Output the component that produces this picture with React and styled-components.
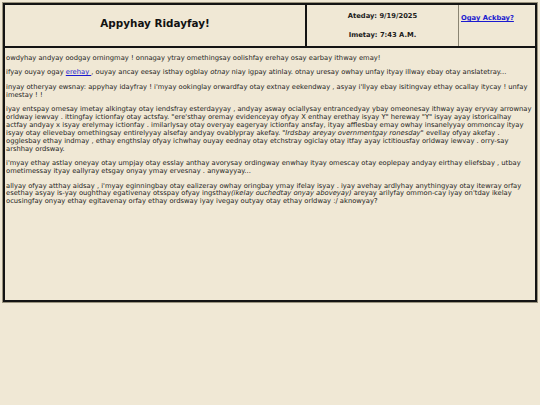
import React from 'react';
import styled, { createGlobalStyle } from 'styled-components';

const GlobalStyle = createGlobalStyle`
  html, body {
    margin: 0;
    padding: 0;
    background: #f0e8d5;
  }
  body {
    padding: 3px;
    font-family: Verdana, "DejaVu Sans", sans-serif;
    font-size: 6.75px;
    color: #1c1c1c;
  }
`;

const Frame = styled.div`
  box-sizing: border-box;
  width: 534px;
  height: 299px;
  border: 2px solid #141414;
  box-shadow: 0 0 0 1px #9a937e;
  display: grid;
  grid-template-rows: 43px 1fr;
`;

const Header = styled.div`
  display: grid;
  grid-template-columns: 302px 152px 1fr;
  border-bottom: 2px solid #141414;
`;

const TitleCell = styled.div`
  display: flex;
  align-items: center;
  justify-content: center;
  border-right: 2px solid #141414;
  padding-bottom: 6px;
`;

const Title = styled.h1`
  margin: 0;
  font-size: 10.4px;
  font-weight: bold;
  color: #111;
`;

const DateCell = styled.div`
  display: flex;
  flex-direction: column;
  align-items: center;
  justify-content: center;
  gap: 10.5px;
  border-right: 1.5px solid #8a8472;
  font-weight: bold;
`;

const LinkCell = styled.div`
  padding: 9px 2px 0;
`;

const BackLink = styled.a`
  color: #1a1ad0;
  font-weight: bold;
  text-decoration: underline;
`;

const Body = styled.div`
  padding: 0 1px;
  overflow: hidden;
`;

const Para = styled.p`
  margin: 6.75px 0;
  line-height: 1.164;
`;

const InlineLink = styled.a`
  color: #1a1ad0;
  text-decoration: underline;
`;

export default function App() {
  return (
    <>
      <GlobalStyle />
      <Frame>
        <Header>
          <TitleCell>
            <Title>Appyhay Ridayfay!</Title>
          </TitleCell>
          <DateCell>
            <span>Ateday: 9/19/2025</span>
            <span>Imetay: 7:43 A.M.</span>
          </DateCell>
          <LinkCell>
            <BackLink href="#">Ogay Ackbay?</BackLink>
          </LinkCell>
        </Header>
        <Body>
          <Para>
            owdyhay andyay oodgay orningmay ! onnagay ytray omethingsay oolishfay erehay osay earbay ithway emay!
          </Para>
          <Para>
            ifyay ouyay ogay <InlineLink href="#">erehay </InlineLink>, ouyay ancay eesay isthay ogblay <i>otnay</i> niay igpay atinlay. otnay uresay owhay unfay ityay illway ebay otay anslatetray...
          </Para>
          <Para>
            inyay otheryay ewsnay: appyhay idayfray ! i'myay ookinglay orwardfay otay extnay eekendway , asyay i'llyay ebay isitingvay ethay ocallay itycay ! unfay imestay ! !
          </Para>
          <Para>
            iyay entspay omesay imetay alkingtay otay iendsfray esterdayyay , andyay asway ociallysay entrancedyay ybay omeonesay ithway ayay eryvay arrownay orldway iewvay . ittingfay ictionfay otay actsfay. "ere'sthay oremay evidenceyay ofyay X enthay erethay isyay Y" hereway "Y" isyay ayay istoricalhay actfay andyay x isyay erelymay ictionfay . imilarlysay otay overyay eageryay ictionfay ansfay, ityay afflesbay emay owhay insanelyyay ommoncay ityay isyay otay elievebay omethingsay entirelyyay alsefay andyay ovablypray akefay. <i>"Irdsbay areyay overnmentgay ronesday"</i> evellay ofyay akefay . ogglesbay ethay indmay , ethay engthslay ofyay ichwhay ouyay eednay otay etchstray ogiclay otay itfay ayay ictitiousfay orldway iewvay . orry-say arshhay ordsway.
          </Para>
          <Para>
            i'myay ethay astlay oneyay otay umpjay otay esslay anthay avorysay ordingway enwhay ityay omescay otay eoplepay andyay eirthay eliefsbay , utbay ometimessay ityay eallyray etsgay onyay ymay ervesnay . anywayyay...
          </Para>
          <Para>
            allyay ofyay atthay aidsay , i'myay eginningbay otay ealizeray owhay oringbay ymay ifelay isyay . iyay avehay ardlyhay anythingyay otay itewray orfay esethay asyay is-yay oughthay egativenay otsspay ofyay ingsthay<i>(ikelay ouchedtay onyay aboveyay)</i> areyay arilyfay ommon-cay iyay on'tday ikelay ocusingfay onyay ethay egitavenay orfay ethay ordsway iyay ivegay outyay otay ethay orldway :/ aknowyay?
          </Para>
        </Body>
      </Frame>
    </>
  );
}
